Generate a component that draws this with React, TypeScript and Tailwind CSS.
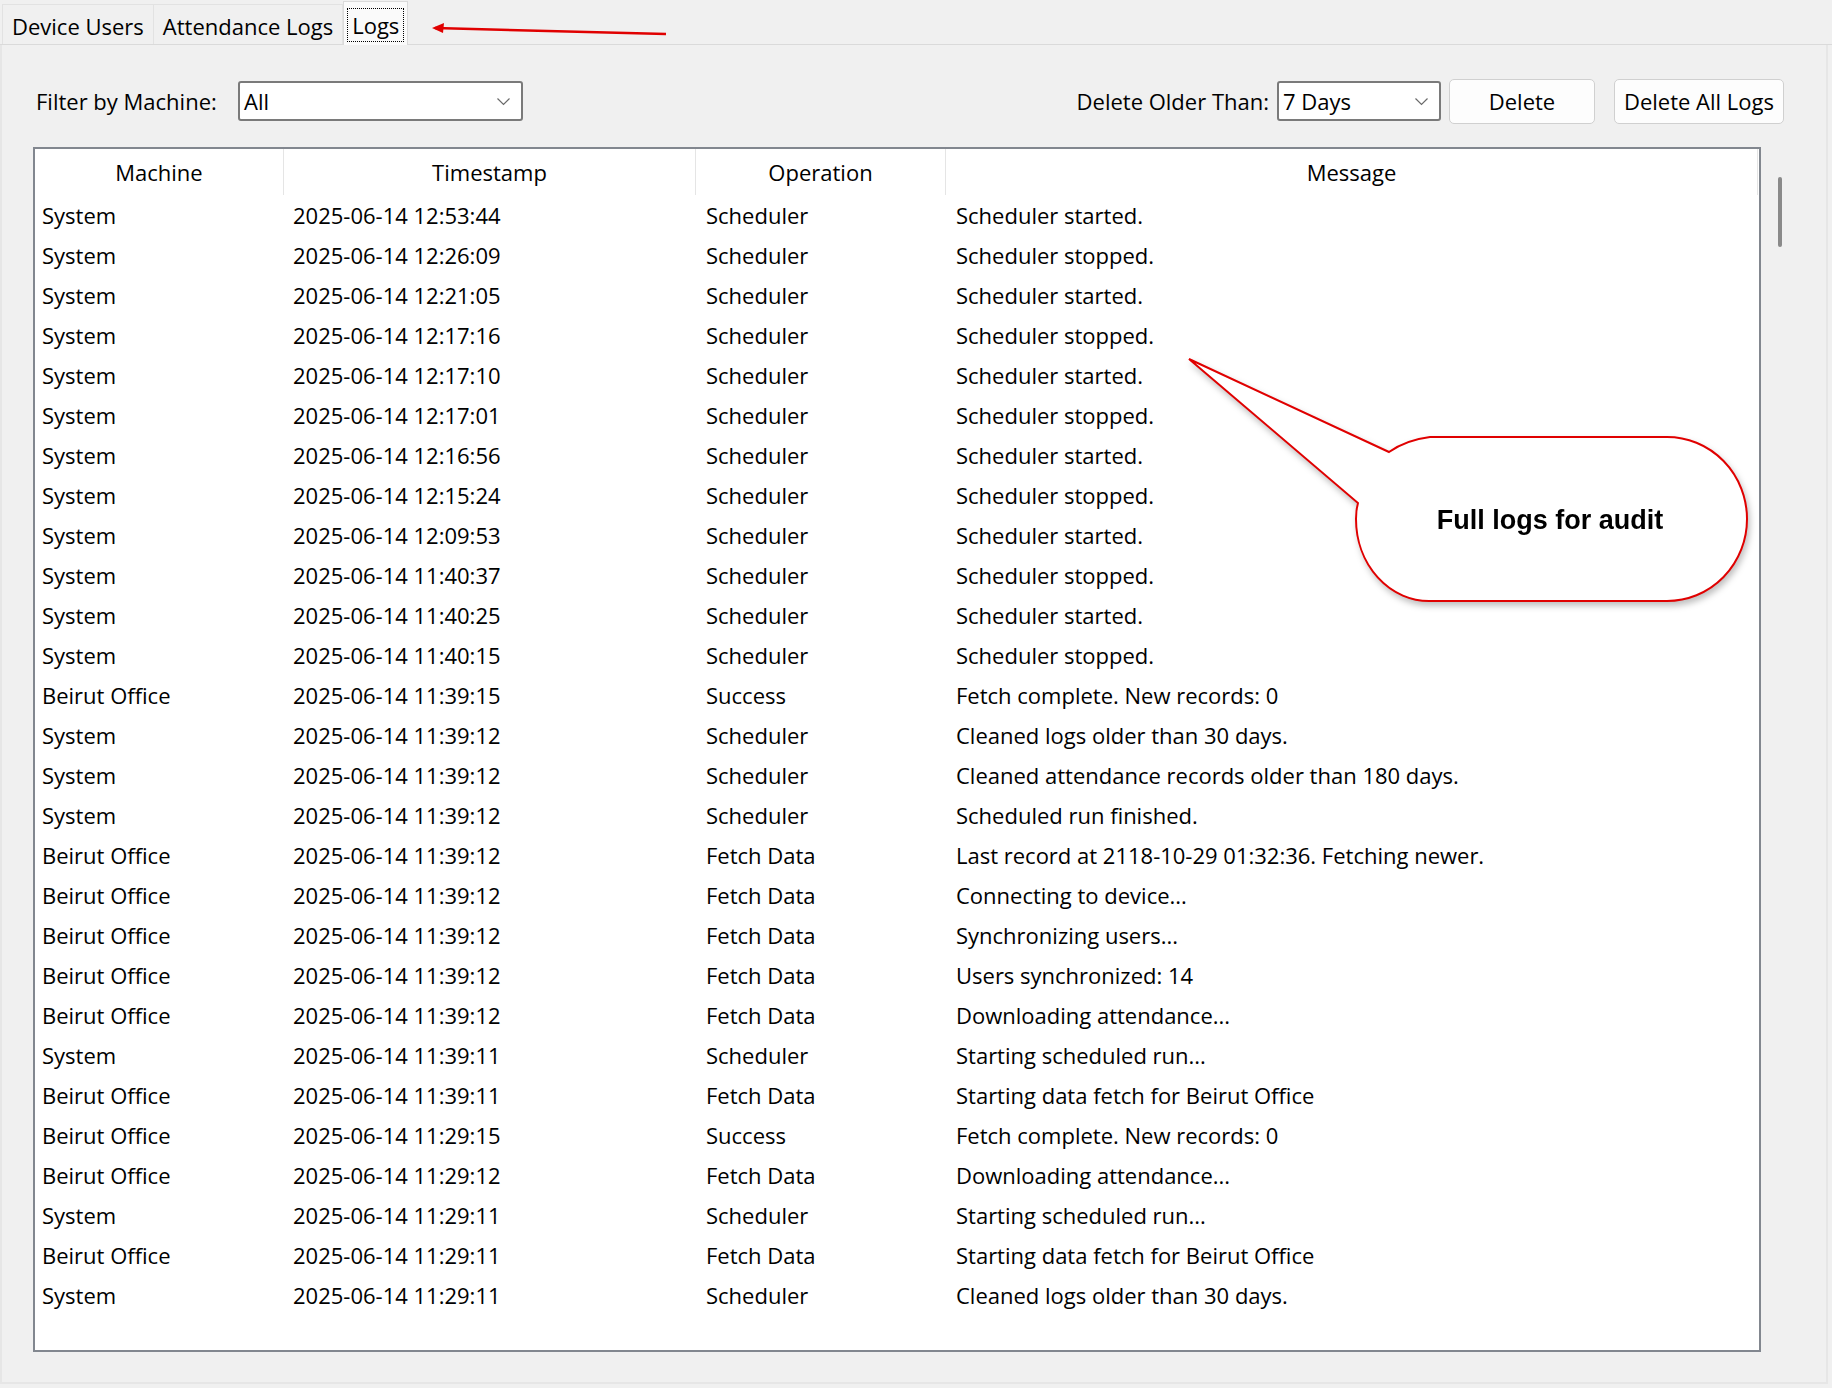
import React from 'react'

type Row = [string, string, string, string]

const rows: Row[] = [
  ['System', '2025-06-14 12:53:44', 'Scheduler', 'Scheduler started.'],
  ['System', '2025-06-14 12:26:09', 'Scheduler', 'Scheduler stopped.'],
  ['System', '2025-06-14 12:21:05', 'Scheduler', 'Scheduler started.'],
  ['System', '2025-06-14 12:17:16', 'Scheduler', 'Scheduler stopped.'],
  ['System', '2025-06-14 12:17:10', 'Scheduler', 'Scheduler started.'],
  ['System', '2025-06-14 12:17:01', 'Scheduler', 'Scheduler stopped.'],
  ['System', '2025-06-14 12:16:56', 'Scheduler', 'Scheduler started.'],
  ['System', '2025-06-14 12:15:24', 'Scheduler', 'Scheduler stopped.'],
  ['System', '2025-06-14 12:09:53', 'Scheduler', 'Scheduler started.'],
  ['System', '2025-06-14 11:40:37', 'Scheduler', 'Scheduler stopped.'],
  ['System', '2025-06-14 11:40:25', 'Scheduler', 'Scheduler started.'],
  ['System', '2025-06-14 11:40:15', 'Scheduler', 'Scheduler stopped.'],
  ['Beirut Office', '2025-06-14 11:39:15', 'Success', 'Fetch complete. New records: 0'],
  ['System', '2025-06-14 11:39:12', 'Scheduler', 'Cleaned logs older than 30 days.'],
  ['System', '2025-06-14 11:39:12', 'Scheduler', 'Cleaned attendance records older than 180 days.'],
  ['System', '2025-06-14 11:39:12', 'Scheduler', 'Scheduled run finished.'],
  ['Beirut Office', '2025-06-14 11:39:12', 'Fetch Data', 'Last record at 2118-10-29 01:32:36. Fetching newer.'],
  ['Beirut Office', '2025-06-14 11:39:12', 'Fetch Data', 'Connecting to device...'],
  ['Beirut Office', '2025-06-14 11:39:12', 'Fetch Data', 'Synchronizing users...'],
  ['Beirut Office', '2025-06-14 11:39:12', 'Fetch Data', 'Users synchronized: 14'],
  ['Beirut Office', '2025-06-14 11:39:12', 'Fetch Data', 'Downloading attendance...'],
  ['System', '2025-06-14 11:39:11', 'Scheduler', 'Starting scheduled run...'],
  ['Beirut Office', '2025-06-14 11:39:11', 'Fetch Data', 'Starting data fetch for Beirut Office'],
  ['Beirut Office', '2025-06-14 11:29:15', 'Success', 'Fetch complete. New records: 0'],
  ['Beirut Office', '2025-06-14 11:29:12', 'Fetch Data', 'Downloading attendance...'],
  ['System', '2025-06-14 11:29:11', 'Scheduler', 'Starting scheduled run...'],
  ['Beirut Office', '2025-06-14 11:29:11', 'Fetch Data', 'Starting data fetch for Beirut Office'],
  ['System', '2025-06-14 11:29:11', 'Scheduler', 'Cleaned logs older than 30 days.'],
]

const cols = [
  { label: 'Machine', w: 'w-[249px]' },
  { label: 'Timestamp', w: 'w-[412px]' },
  { label: 'Operation', w: 'w-[250px]' },
  { label: 'Message', w: 'w-[812px]' },
]

function Chevron() {
  return (
    <svg width="15" height="9" viewBox="0 0 15 9" className="shrink-0">
      <path d="M1.5 1.5 L7.5 7.5 L13.5 1.5" fill="none" stroke="#6a6a6a" strokeWidth="1.2" />
    </svg>
  )
}

function Combo({ value, w }: { value: string; w: string }) {
  return (
    <div className={`${w} h-[40px] flex items-center justify-between bg-white border-2 border-[#7a7a7a] rounded-[3px] pl-[4px] pr-[10px]`}>
      <span>{value}</span>
      <Chevron />
    </div>
  )
}

function Callout() {
  return (
    <svg
      className="absolute left-[1180px] top-[350px] pointer-events-none"
      width="590"
      height="270"
      viewBox="0 0 590 270"
      style={{ filter: 'drop-shadow(2px 4px 3px rgba(0,0,0,0.25))' }}
    >
      <path
        d="M9 9 L209 102 Q226 90 250 87 L487 87 A80 82 0 0 1 567 169 A80 82 0 0 1 487 251 L250 251 A73 82 0 0 1 176 169 Q176 160 178 153 Z"
        fill="#ffffff"
        stroke="#e00000"
        strokeWidth="2"
        strokeLinejoin="miter"
      />
      <text
        x="370"
        y="179"
        textAnchor="middle"
        fontFamily="'Liberation Sans', Arial, sans-serif"
        fontWeight="700"
        fontSize="27"
        fill="#000"
      >
        Full logs for audit
      </text>
    </svg>
  )
}

export default function App() {
  return (
    <div
      className="relative w-[1832px] h-[1388px] bg-[#f0f0f0] text-black text-[22px] overflow-hidden"
      style={{ fontFamily: "'Segoe UI', 'Open Sans', 'Noto Sans', sans-serif" }}
    >
      {/* Tab strip */}
      <div className="flex items-end h-[45px] pl-[2px] border-b border-[#dadada]">
        <div className="h-[40px] pt-[3px] px-[9px] flex items-center border border-b-0 border-[#e2e2e2] bg-[#f0f0f0]">Device Users</div>
        <div className="h-[40px] pt-[3px] px-[9px] flex items-center border border-b-0 border-l-0 border-[#e2e2e2] bg-[#f0f0f0]">Attendance Logs</div>
        <div className="h-[44px] -mb-px pt-[2px] px-[3px] flex items-center border border-b-0 border-[#dadada] bg-[#fafafa]">
          <span className="border border-dotted border-black px-[4px] leading-[32px]">Logs</span>
        </div>
      </div>

      {/* red arrow */}
      <svg className="absolute left-[425px] top-[18px]" width="250" height="24" viewBox="0 0 250 24">
        <path d="M10 10 L241 16" stroke="#e00000" strokeWidth="2.5" fill="none" />
        <path d="M7 10 L19 5 L18 15 Z" fill="#e00000" />
      </svg>

      {/* Panel */}
      <div className="h-[1339px] mr-[4px] border-l-2 border-r-2 border-b-2 border-[#e6e6e6] pl-[31px] pt-[33px]">
        {/* Controls */}
        <div className="flex items-center h-[46px] w-[1751px]">
          <span className="w-[205px] shrink-0 pl-[3px]">Filter by Machine:</span>
          <Combo value="All" w="w-[285px]" />
          <div className="flex-1" />
          <span className="mr-[8px]">Delete Older Than:</span>
          <Combo value="7 Days" w="w-[164px]" />
          <button className="ml-[8px] w-[146px] h-[45px] bg-[#fdfdfd] border border-[#d0d0d0] rounded-[5px]">Delete</button>
          <button className="ml-[19px] w-[170px] h-[45px] bg-[#fdfdfd] border border-[#d0d0d0] rounded-[5px]">Delete All Logs</button>
        </div>

        <div className="flex mt-[23px]">
          {/* Table */}
          <div className="w-[1728px] h-[1205px] bg-white border-2 border-[#82878f] overflow-hidden">
            <div className="flex h-[46px]">
              {cols.map((c) => (
                <div key={c.label} className={`${c.w} shrink-0 flex items-center justify-center border-r border-[#e5e5e5]`}>
                  {c.label}
                </div>
              ))}
            </div>
            {rows.map((r, i) => (
              <div key={i} className="flex h-[40px] items-center whitespace-nowrap">
                <div className="w-[249px] shrink-0 pl-[7px]">{r[0]}</div>
                <div className="w-[412px] shrink-0 pl-[9px]">{r[1]}</div>
                <div className="w-[250px] shrink-0 pl-[10px]">{r[2]}</div>
                <div className="w-[812px] shrink-0 pl-[10px]">{r[3]}</div>
              </div>
            ))}
          </div>
          {/* scrollbar */}
          <div className="ml-[17px] pt-[30px]">
            <div className="w-[4px] h-[70px] bg-[#8a8a8a] rounded-full" />
          </div>
        </div>
      </div>

      <Callout />
    </div>
  )
}
